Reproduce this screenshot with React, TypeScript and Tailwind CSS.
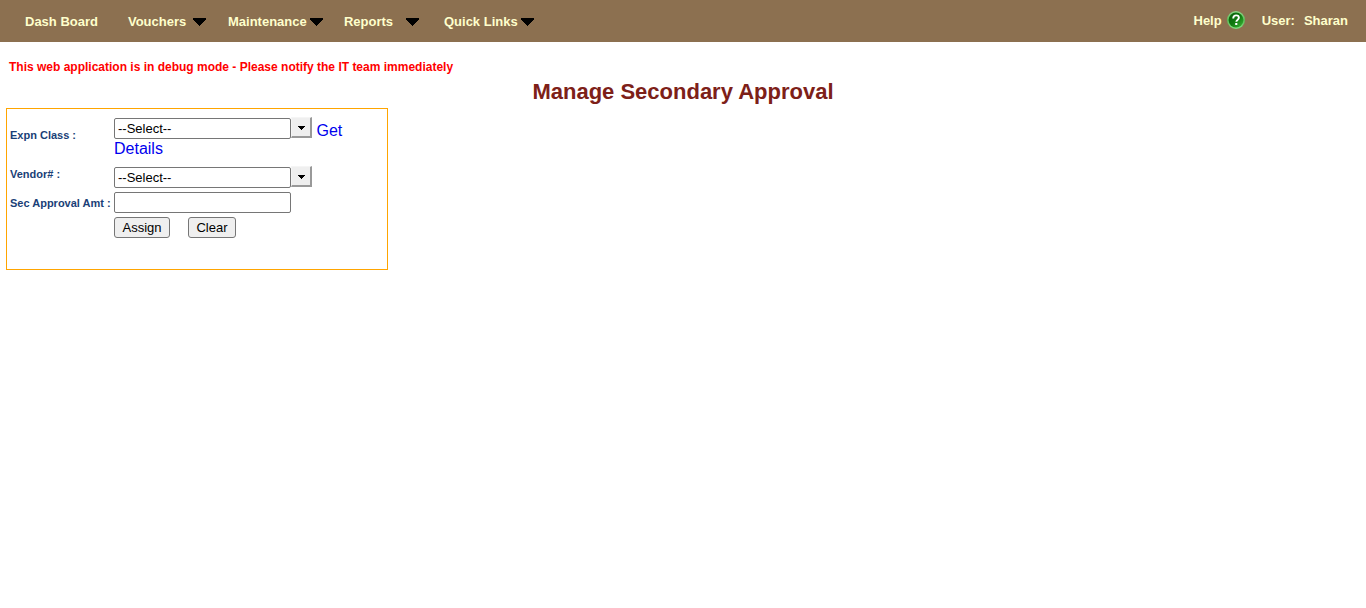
import React from "react";

function DownArrow() {
  return (
    <svg className="mt-px h-2 w-[13px] shrink-0" viewBox="0 0 13 8" shapeRendering="crispEdges" aria-hidden="true">
      <path d="M0 0h13v2h-1v1h-1v1h-1v1H9v1H8v1H7v1H6V7H5V6H4V5H3V4H2V3H1V2H0z" fill="#000" />
    </svg>
  );
}

function HelpIcon() {
  return (
    <svg className="mb-0.5 size-[18px] shrink-0" viewBox="0 0 18 18" aria-hidden="true">
      <defs>
        <linearGradient id="ring" x1="0" y1="0" x2="0" y2="1">
          <stop offset="0" stopColor="#8fd98a" />
          <stop offset="0.5" stopColor="#5cbc58" />
          <stop offset="1" stopColor="#7fdc7c" />
        </linearGradient>
        <linearGradient id="disc" x1="0" y1="0" x2="1" y2="1">
          <stop offset="0" stopColor="#0a5c0a" />
          <stop offset="0.5" stopColor="#0f780f" />
          <stop offset="1" stopColor="#3fb83a" />
        </linearGradient>
      </defs>
      <circle cx="9" cy="9" r="9" fill="url(#ring)" />
      <circle cx="9" cy="9" r="7.4" fill="url(#disc)" />
      <path
        d="M6.2 7.4C6.2 5.3 7.4 4.4 9.1 4.4s2.8 1 2.8 2.4c0 1.8-2.6 2-2.6 4"
        fill="none"
        stroke="#fff"
        strokeWidth="1.9"
      />
      <rect x="8.2" y="12" width="2.1" height="2" fill="#fff" />
    </svg>
  );
}

function MenuItem({ label, className }: { label: string; className: string }) {
  return (
    <button type="button" className={`flex items-center justify-between ${className}`}>
      {label}
      <DownArrow />
    </button>
  );
}

const fieldStyle =
  "h-[21px] w-[177px] rounded-[2px] border border-[#767676] bg-white px-[3px] text-[13px] text-black";

function ComboBox({ id, label }: { id: string; label: string }) {
  return (
    <span className="inline-flex items-start pt-px align-text-bottom">
      <input id={id} type="text" defaultValue="--Select--" className={fieldStyle} />
      <button
        type="button"
        aria-label={`Show ${label} options`}
        className="-mt-px flex size-[21px] items-center justify-center border-t border-r-2 border-b-2 border-l border-t-[#f5f5f5] border-r-[#999] border-b-[#999] border-l-[#f5f5f5] bg-[#efefef]"
      >
        <svg className="mt-0.5 h-1 w-[7px]" viewBox="0 0 7 4" shapeRendering="crispEdges" aria-hidden="true">
          <path d="M0 0h7v1H6v1H5v1H4v1H3V3H2V2H1V1H0z" fill="#000" />
        </svg>
      </button>
    </span>
  );
}

const labelStyle = "text-[11px] leading-4 font-bold text-[#1a3f77]";
const buttonStyle =
  "h-[21px] rounded-[3px] border border-[#767676] bg-[#efefef] text-[13px] leading-[19px] text-black";

export default function App() {
  return (
    <div className="bg-white font-['Liberation_Sans',Arial,sans-serif]">
      <header className="flex h-[42px] items-center justify-between bg-[#8c7050] pr-[18px] pl-[25px] text-[13px] font-bold text-[#ffffcc]">
        <nav className="flex items-center pt-px">
          <a href="#dashboard" className="mr-[30px]">
            Dash Board
          </a>
          <MenuItem label="Vouchers" className="mr-[22px] w-[78px]" />
          <MenuItem label="Maintenance" className="mr-[21px] w-[95px]" />
          <MenuItem label="Reports" className="mr-[25px] w-[75px]" />
          <MenuItem label="Quick Links" className="w-[90px]" />
        </nav>
        <div className="flex items-center">
          <a href="#help" className="mr-[17px] flex items-center gap-[5px]">
            Help
            <HelpIcon />
          </a>
          <span className="mr-[9px]">User:</span>
          <span>Sharan</span>
        </div>
      </header>

      <main className="px-[6px] pt-4">
        <p className="px-[3px] text-[12px] leading-[18px] font-bold text-[#ff0000]">
          This web application is in debug mode - Please notify the IT team immediately
        </p>
        <h1 className="mt-[2px] text-center text-[22px] leading-7 font-bold text-[#7d2018]">
          Manage Secondary Approval
        </h1>

        <form
          className="mt-[2px] w-full max-w-[382px] border border-[#ffa500] pt-2 pb-[31px] pl-[3px]"
          onSubmit={(e) => e.preventDefault()}
        >
          <div className="grid grid-cols-[104px_1fr] items-center gap-y-1">
            <label htmlFor="expn-class" className={`pb-2.5 ${labelStyle}`}>
              Expn Class :
            </label>
            <div className="pb-1 text-[16px] leading-[18px]">
              <ComboBox id="expn-class" label="Expn Class" />{" "}
              <a href="#details" className="text-[#0000ee]">
                Get Details
              </a>
            </div>

            <label htmlFor="vendor" className={`pb-1.5 ${labelStyle}`}>
              Vendor# :
            </label>
            <div className="flex">
              <ComboBox id="vendor" label="Vendor#" />
            </div>

            <label htmlFor="approval-amount" className={labelStyle}>
              Sec Approval Amt :
            </label>
            <div className="flex">
              <input id="approval-amount" type="text" className={fieldStyle} />
            </div>

            <div className="col-start-2 flex gap-[18px]">
              <button type="submit" className={`w-14 ${buttonStyle}`}>
                Assign
              </button>
              <button type="reset" className={`w-12 ${buttonStyle}`}>
                Clear
              </button>
            </div>
          </div>
        </form>
      </main>
    </div>
  );
}
